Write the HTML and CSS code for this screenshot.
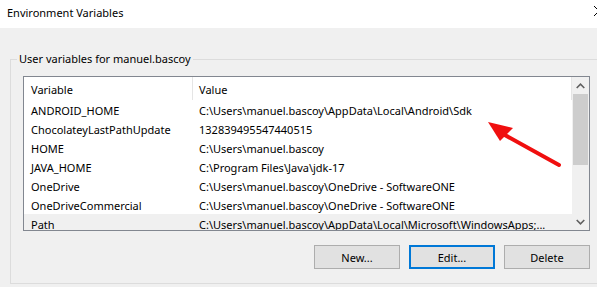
FILE: index.html
```html
<!DOCTYPE html>
<html>
<head>
<meta charset="utf-8">
<link rel="stylesheet" href="styles.css">
</head>
<body>
<div class="window">
  <div class="titlebar">
    <span class="title">Environment Variables</span>
    <svg class="close" width="12" height="12" viewBox="0 0 12 12"><path d="M1 1 L11 11 M11 1 L1 11" stroke="#000" stroke-width="1" fill="none"/></svg>
  </div>
  <div class="body">
    <fieldset class="group">
      <legend class="legend">User variables for manuel.bascoy</legend>
      <div class="listbox">
        <div class="list">
          <div class="header">
            <div class="col1 hcell">Variable</div>
            <div class="col2 hcell">Value</div>
          </div>
          <div class="row"><div class="col1">ANDROID_HOME</div><div class="col2">C:\Users\manuel.bascoy\AppData\Local\Android\Sdk</div></div>
          <div class="row"><div class="col1">ChocolateyLastPathUpdate</div><div class="col2">132839495547440515</div></div>
          <div class="row"><div class="col1">HOME</div><div class="col2">C:\Users\manuel.bascoy</div></div>
          <div class="row"><div class="col1">JAVA_HOME</div><div class="col2">C:\Program Files\Java\jdk-17</div></div>
          <div class="row"><div class="col1">OneDrive</div><div class="col2">C:\Users\manuel.bascoy\OneDrive - SoftwareONE</div></div>
          <div class="row"><div class="col1">OneDriveCommercial</div><div class="col2">C:\Users\manuel.bascoy\OneDrive - SoftwareONE</div></div>
          <div class="row selected"><div class="col1">Path</div><div class="col2">C:\Users\manuel.bascoy\AppData\Local\Microsoft\WindowsApps;...</div></div>
        </div>
        <div class="scrollbar">
          <div class="sbtn"><svg width="9" height="6" viewBox="0 0 9 6"><path d="M0.7 5 L4.5 1.2 L8.3 5" stroke="#606060" stroke-width="1.6" fill="none"/></svg></div>
          <div class="track"><div class="thumb"></div></div>
          <div class="sbtn"><svg width="9" height="6" viewBox="0 0 9 6"><path d="M0.7 1 L4.5 4.8 L8.3 1" stroke="#606060" stroke-width="1.6" fill="none"/></svg></div>
        </div>
      </div>
      <div class="buttons">
        <button class="btn">New...</button>
        <button class="btn default">Edit...</button>
        <button class="btn">Delete</button>
      </div>
    </fieldset>
  </div>
  <svg class="arrow" width="597" height="287" viewBox="0 0 597 287">
    <line x1="559" y1="165" x2="503" y2="134" stroke="#f00f0f" stroke-width="4" stroke-linecap="round"/>
    <polygon points="488,122 513,128 500,141" fill="#f00f0f"/>
  </svg>
</div>
</body>
</html>
```

FILE: styles.css
```css
html, body {
  margin: 0;
  padding: 0;
}
body {
  width: 597px;
  height: 287px;
  overflow: hidden;
  background: #f0f0f0;
  font-family: "Noto Sans", "Open Sans", sans-serif;
  font-size: 11px;
  color: #000;
}
.window {
  position: relative;
  width: 597px;
  height: 287px;
  overflow: hidden;
}
.titlebar {
  height: 28px;
  background: #fff;
  display: flex;
  align-items: center;
  padding-left: 7px;
  box-sizing: border-box;
}
.title {
  font-size: 11px;
  line-height: 16px;
  margin-top: -2px;
}
.close {
  position: absolute;
  top: 5px;
  left: 593px;
}
.body {
  padding: 23px 0 0 10px;
}
.group {
  margin: 0;
  width: 591px;
  box-sizing: border-box;
  border: 1px solid #dcdcdc;
  padding: 9px 12px 14px 12px;
  min-width: 0;
}
.legend {
  padding: 0 2px;
  margin-left: -6px;
  line-height: 16px;
}
.listbox {
  width: 567px;
  height: 155px;
  box-sizing: border-box;
  border: 1px solid #828790;
  background: #fff;
  display: flex;
  overflow: hidden;
}
.list {
  flex: 1;
  overflow: hidden;
}
.header {
  display: flex;
  height: 23px;
  align-items: stretch;
}
.hcell {
  display: flex;
  align-items: center;
  padding-top: 2px;
}
.header .col1 {
  border-right: 1px solid #e5e5e5;
}
.header .col2 {
  border-right: 1px solid #e5e5e5;
  flex: 1;
}
.col1 {
  width: 169px;
  box-sizing: border-box;
  padding-left: 7px;
  white-space: nowrap;
  flex: none;
}
.col2 {
  padding-left: 6px;
  white-space: nowrap;
}
.row {
  display: flex;
  height: 19px;
  line-height: 19px;
  padding-top: 1px;
  box-sizing: border-box;
}
.selected {
  background: #f0f0f0;
}
.scrollbar {
  width: 17px;
  flex: none;
  background: #f0f0f0;
  display: flex;
  flex-direction: column;
}
.sbtn {
  height: 17px;
  display: flex;
  align-items: center;
  justify-content: center;
  flex: none;
}
.track {
  flex: 1;
}
.thumb {
  height: 71px;
  margin: 0 1px;
  background: #cdcdcd;
}
.buttons {
  display: flex;
  justify-content: flex-end;
  gap: 9px;
  margin-top: 14px;
  width: 567px;
}
.btn {
  width: 86px;
  height: 24px;
  box-sizing: border-box;
  background: #e1e1e1;
  border: 1px solid #adadad;
  font-family: inherit;
  font-size: 11px;
  color: #000;
  padding: 0;
  margin: 0;
}
.btn.default {
  border: 2px solid #0078d7;
}
.arrow {
  position: absolute;
  top: 0;
  left: 0;
  pointer-events: none;
}
```
